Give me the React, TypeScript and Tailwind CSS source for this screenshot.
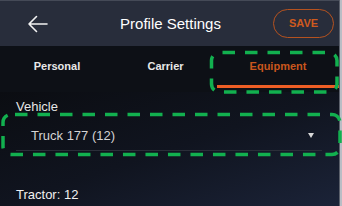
import React from "react";

export default function App() {
  return (
    <div
      className="relative w-[342px] h-[206px] overflow-hidden flex bg-[#0c0e13]"
      style={{ fontFamily: '"Liberation Sans", Arial, sans-serif' }}
    >
      <div className="flex-1 flex flex-col min-w-0">
        {/* Header */}
        <div className="h-[46px] shrink-0 bg-[#282d3b] border-t border-[#454a57] flex items-center relative">
          <div className="w-[74px] pl-[27px] flex items-center">
            <svg width="21" height="18" viewBox="0 0 21 18" fill="none">
              <path d="M20 9H2M9.5 1.5L2 9l7.5 7.5" stroke="#f2f2f2" strokeWidth="1.6" strokeLinecap="round" strokeLinejoin="round" />
            </svg>
          </div>
          <div className="flex-1 text-center text-[15px] text-white leading-none pl-[2px]">Profile Settings</div>
          <div className="w-[74px] flex justify-end pr-[5px]">
            <div className="w-[61px] h-[29px] rounded-full border-[1.5px] border-[#b5521f] flex items-center justify-center text-[11px] font-bold text-[#cf5a1e] leading-none">
              SAVE
            </div>
          </div>
        </div>
        {/* Tabs */}
        <div className="h-[46px] shrink-0 bg-[#0d1016] flex">
          <div className="w-[114px] flex items-center justify-center text-[11px] font-bold text-[#e8e8e8] pb-[6px]">Personal</div>
          <div className="w-[103px] flex items-center justify-center text-[11px] font-bold text-[#e8e8e8] pb-[6px]">Carrier</div>
          <div className="flex-1 flex flex-col">
            <div className="flex-1 flex items-center justify-center text-[11px] font-bold text-[#c9561d] pt-[1px]">Equipment</div>
            <div className="h-[3px] bg-[#ee5e25] mb-[4px]" />
          </div>
        </div>
        {/* Body */}
        <div className="flex-1 bg-gradient-to-br from-[#0b0d12] via-[#10141f] to-[#1b2338] px-[16px] flex flex-col">
          <div className="text-[13px] text-[#e6e6e6] leading-none mt-[8px]">Vehicle</div>
          <div className="mt-[14px] h-[24px] border-b border-[#2b2f39] mr-[1px] flex items-center pl-[15px] pr-[8px] pb-[6px]">
            <span className="flex-1 text-[13px] text-[#d4d4d4] leading-none">Truck 177 (12)</span>
            <svg width="6" height="5" viewBox="0 0 6 5">
              <path d="M0 0h6L3 5z" fill="#d8d8d8" />
            </svg>
          </div>
          <div className="text-[13px] text-[#f0f0f0] leading-none mt-[37px]">Tractor: 12</div>
        </div>
      </div>
      {/* right edge strip */}
      <div className="w-[3px] shrink-0 border-l border-[#5b606b] bg-[#b9bdc5]" />

      {/* green dashed annotations */}
      <svg className="absolute inset-0 pointer-events-none" width="342" height="206" viewBox="0 0 342 206">
        <rect x="211.5" y="52.5" width="125.5" height="39.5" rx="8" fill="none" stroke="#12b04f" strokeWidth="3.5" strokeDasharray="12.5 10" strokeDashoffset="-3" />
        <rect x="3" y="114.5" width="337" height="40" rx="8" fill="none" stroke="#12b04f" strokeWidth="3.5" strokeDasharray="12.5 10" strokeDashoffset="-4" />
      </svg>
    </div>
  );
}
